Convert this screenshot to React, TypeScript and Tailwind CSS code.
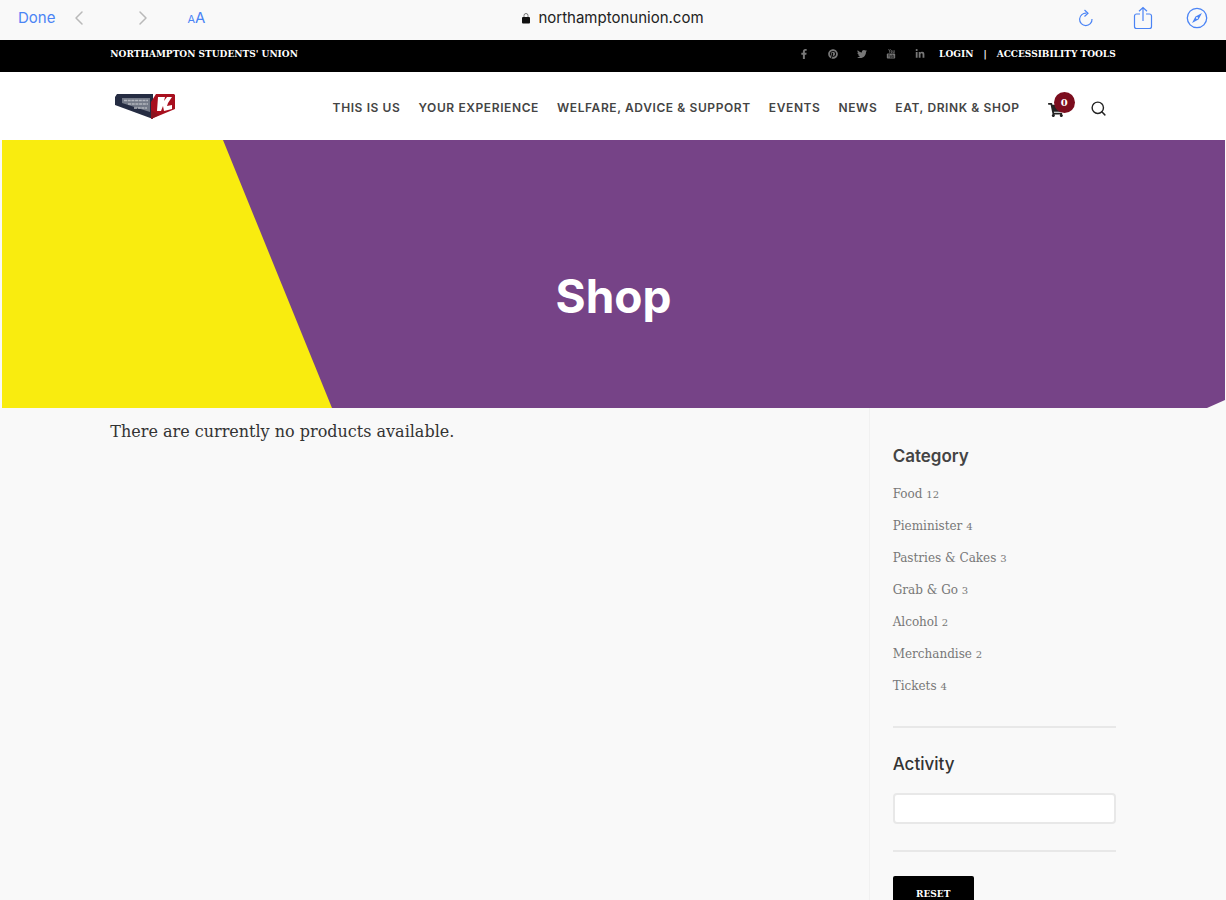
import React from 'react';
import { ChevronLeft, ChevronRight, Search } from 'lucide-react';
import { FaFacebookF, FaLinkedinIn, FaPinterest, FaTwitter, FaShoppingCart } from 'react-icons/fa';

const BrowserBar = () => (
  <div className="grid grid-cols-3 items-center h-10 px-[18px] pb-1 bg-[#f9f9f9] font-['Inter',sans-serif] text-[#4b84f5]">
    <div className="flex items-center">
      <button type="button" className="text-[15px] leading-5">Done</button>
      <button type="button" aria-label="Back" className="ml-3 text-[#b9b9b9]">
        <ChevronLeft className="w-6 h-6" strokeWidth={1.5} />
      </button>
      <button type="button" aria-label="Forward" className="ml-10 text-[#b9b9b9]">
        <ChevronRight className="w-6 h-6" strokeWidth={1.5} />
      </button>
      <button type="button" aria-label="Text size" className="ml-8 flex items-baseline leading-5">
        <span className="text-[11px]">A</span>
        <span className="text-[15px]">A</span>
      </button>
    </div>
    <div className="flex items-center justify-center gap-2 text-[15px] leading-5 text-[#222]">
      <svg viewBox="0 0 8 12" className="w-2 h-3" fill="none">
        <path d="M2 6V3.5a2 2 0 0 1 4 0V6" stroke="#777" />
        <rect y="5" width="8" height="6.5" rx="1" fill="#111" />
      </svg>
      <span>northamptonunion.com</span>
    </div>
    <div className="flex items-center justify-end">
      <button type="button" aria-label="Reload">
        <svg viewBox="0 0 18 20" className="w-[18px] h-5" fill="none" stroke="currentColor" strokeWidth="1.2">
          <path d="M10.5 5.2A6.2 6.2 0 1 0 16 11" />
          <path d="M8.5 2l3.5 3.200L8.5 8.5" />
        </svg>
      </button>
      <button type="button" aria-label="Share" className="ml-[38px]">
        <svg viewBox="0 0 22 24" className="w-[22px] h-6" fill="none" stroke="currentColor" strokeWidth="1.2">
          <path d="M8 8H4.5A2 2 0 0 0 2.5 10v10.500a2 2 0 0 0 2 2h13a2 2 0 0 0 2-2V10a2 2 0 0 0-2-2H14" />
          <path d="M11 15V1.500M7 5.200l4-3.700 4 3.700" />
        </svg>
      </button>
      <button type="button" aria-label="Open in browser" className="ml-8">
        <svg viewBox="0 0 22 22" className="w-[22px] h-[22px]" fill="none">
          <circle cx="11" cy="11" r="9.7" stroke="currentColor" strokeWidth="1.3" />
          <path d="M16 6l-3.500 6.500L6 16l3.500-6.500z" fill="currentColor" />
          <circle cx="11" cy="11" r="1" fill="#f9f9f9" />
        </svg>
      </button>
    </div>
  </div>
);

const YoutubeIcon = ({ className }: { className?: string }) => (
  <svg viewBox="0 0 10 12" className={className} fill="none">
    <path d="M2 0l1.200 2.300V4.500M4.500 0L3.200 2.300M5 2v2.300h1.200V2zM7.500 1.500v3H9v-3" stroke="currentColor" strokeWidth=".8" />
    <rect y="5.5" width="10" height="6" rx="1" fill="currentColor" />
    <path d="M1.500 7h2M2.500 7v3.300M4.300 7.500v2.800h1V7.500M6.500 6.500v3.800h1.700V8H6.500" stroke="#000" strokeWidth=".6" />
  </svg>
);

const socials = [
  { label: 'Facebook', icon: FaFacebookF },
  { label: 'Pinterest', icon: FaPinterest },
  { label: 'Twitter', icon: FaTwitter },
  { label: 'YouTube', icon: YoutubeIcon },
  { label: 'LinkedIn', icon: FaLinkedinIn }
];

const TopBar = () => (
  <div className="flex items-center justify-between h-8 px-[9%] pb-1 bg-black text-white text-[9px] leading-4 font-bold font-['DejaVu_Serif',serif]">
    <a href="#home">NORTHAMPTON STUDENTS' UNION</a>
    <div className="flex items-center">
      <div className="flex items-center gap-[19px] mr-[14px] text-[#777]">
        {socials.map(({ label, icon: Icon }) => (
          <a key={label} href="#social" aria-label={label}>
            <Icon className="w-[10px] h-[10px]" />
          </a>
        ))}
      </div>
      <a href="#login">LOGIN</a>
      <span className="mx-[10px]">|</span>
      <a href="#accessibility">ACCESSIBILITY TOOLS</a>
    </div>
  </div>
);

const Logo = () => (
  <svg viewBox="0 0 62 27" className="w-[62px] h-[27px]" role="img" aria-label="Northampton Students' Union">
    <path d="M3 1h36v25L1 12V4z" fill="#252c42" />
    <path d="M8 5h28v14L8 10z" fill="#737987" />
    <path d="M10 7.500h24M14 11h20M20 15h13" stroke="#b4b7bf" strokeWidth="1.5" strokeDasharray="3 .7" />
    <path d="M42 1h18l1 1v14L37 26V9z" fill="#a80f1e" />
    <path d="M37 17v9l8-4z" fill="#8c1420" />
    <path d="M44 4h7l-1 4 3-4h5l-4 6-1 3 5-1v4l-8 2-1-5-2 5h-4z" fill="#fff" />
  </svg>
);

const navItems = ['THIS IS US', 'YOUR EXPERIENCE', 'WELFARE, ADVICE & SUPPORT', 'EVENTS', 'NEWS', 'EAT, DRINK & SHOP'];

const Header = () => (
  <header className="flex items-center justify-between h-[68px] px-[9%] bg-white">
    <a href="#home" className="ml-1">
      <Logo />
    </a>
    <div className="flex items-center pr-[9px]">
      <nav className="flex gap-[18px] mt-1 text-xs leading-4 font-semibold tracking-wider text-[#444] font-['Inter',sans-serif] whitespace-nowrap">
        {navItems.map((item) => (
          <a key={item} href="#nav">{item}</a>
        ))}
      </nav>
      <a href="#cart" aria-label="Cart" className="relative ml-7 mt-2 text-[#222]">
        <FaShoppingCart className="w-4 h-4" />
        <span className="absolute -top-[10px] left-[6px] flex items-center justify-center w-[21px] h-[21px] rounded-full bg-[#7b0d1e] text-white text-[10px] leading-none font-bold font-['DejaVu_Serif',serif]">
          0
        </span>
      </a>
      <button type="button" aria-label="Search" className="ml-[26px] mt-1 text-[#222]">
        <Search className="w-[17px] h-[17px]" />
      </button>
    </div>
  </header>
);

const Hero = () => (
  <section className="relative h-[268px] ml-[2px] mr-px">
    <svg className="absolute inset-0 w-full h-full" viewBox="0 0 1223 268" preserveAspectRatio="none">
      <path d="M0 0h1223v260l-18 8H0z" fill="#764387" />
      <path d="M0 0h221l109 268H0z" fill="#f9ec0f" />
    </svg>
    <div className="relative flex items-center justify-center h-full pt-11">
      <h1 className="text-[46px] leading-none font-bold text-white font-['Inter',sans-serif]">Shop</h1>
    </div>
  </section>
);

const categories = [
  { name: 'Food', count: 12 },
  { name: 'Pieminister', count: 4 },
  { name: 'Pastries & Cakes', count: 3 },
  { name: 'Grab & Go', count: 3 },
  { name: 'Alcohol', count: 2 },
  { name: 'Merchandise', count: 2 },
  { name: 'Tickets', count: 4 }
];

const Sidebar = () => (
  <aside className="w-[247px] shrink-0 pl-[23px] pt-9 border-l border-[#f1f1f1]">
    <h2 className="text-[17px] leading-6 font-semibold text-[#444] font-['Inter',sans-serif]">Category</h2>
    <ul className="mt-[10px] pb-6 border-b-2 border-[#e8e8e8]">
      {categories.map((category) => (
        <li key={category.name} className="h-8 flex items-center text-xs leading-4 text-[#777]">
          <a href="#category">
            {category.name} <span className="text-[10px]">{category.count}</span>
          </a>
        </li>
      ))}
    </ul>
    <div className="pt-6 pb-[26px] border-b-2 border-[#e8e8e8]">
      <label htmlFor="activity" className="block text-[17px] leading-6 font-medium text-[#333] font-['Inter',sans-serif]">
        Activity
      </label>
      <input
        id="activity"
        type="text"
        className="block w-full h-[31px] mt-[17px] px-2 bg-white border-2 border-[#e8e8e8] rounded-sm text-sm"
      />
    </div>
    <button type="button" className="w-[81px] h-9 mt-6 bg-black rounded-xs text-white text-[9px] leading-4 font-bold">
      RESET
    </button>
  </aside>
);

const App = () => {
  return (
    <div className="min-h-screen bg-[#f9f9f9] font-['DejaVu_Serif',serif]">
      <BrowserBar />
      <TopBar />
      <Header />
      <Hero />
      <main className="flex justify-between px-[9%]">
        <p className="pt-3 text-base leading-6 text-[#333]">There are currently no products available.</p>
        <Sidebar />
      </main>
    </div>
  );
};

export default App;
